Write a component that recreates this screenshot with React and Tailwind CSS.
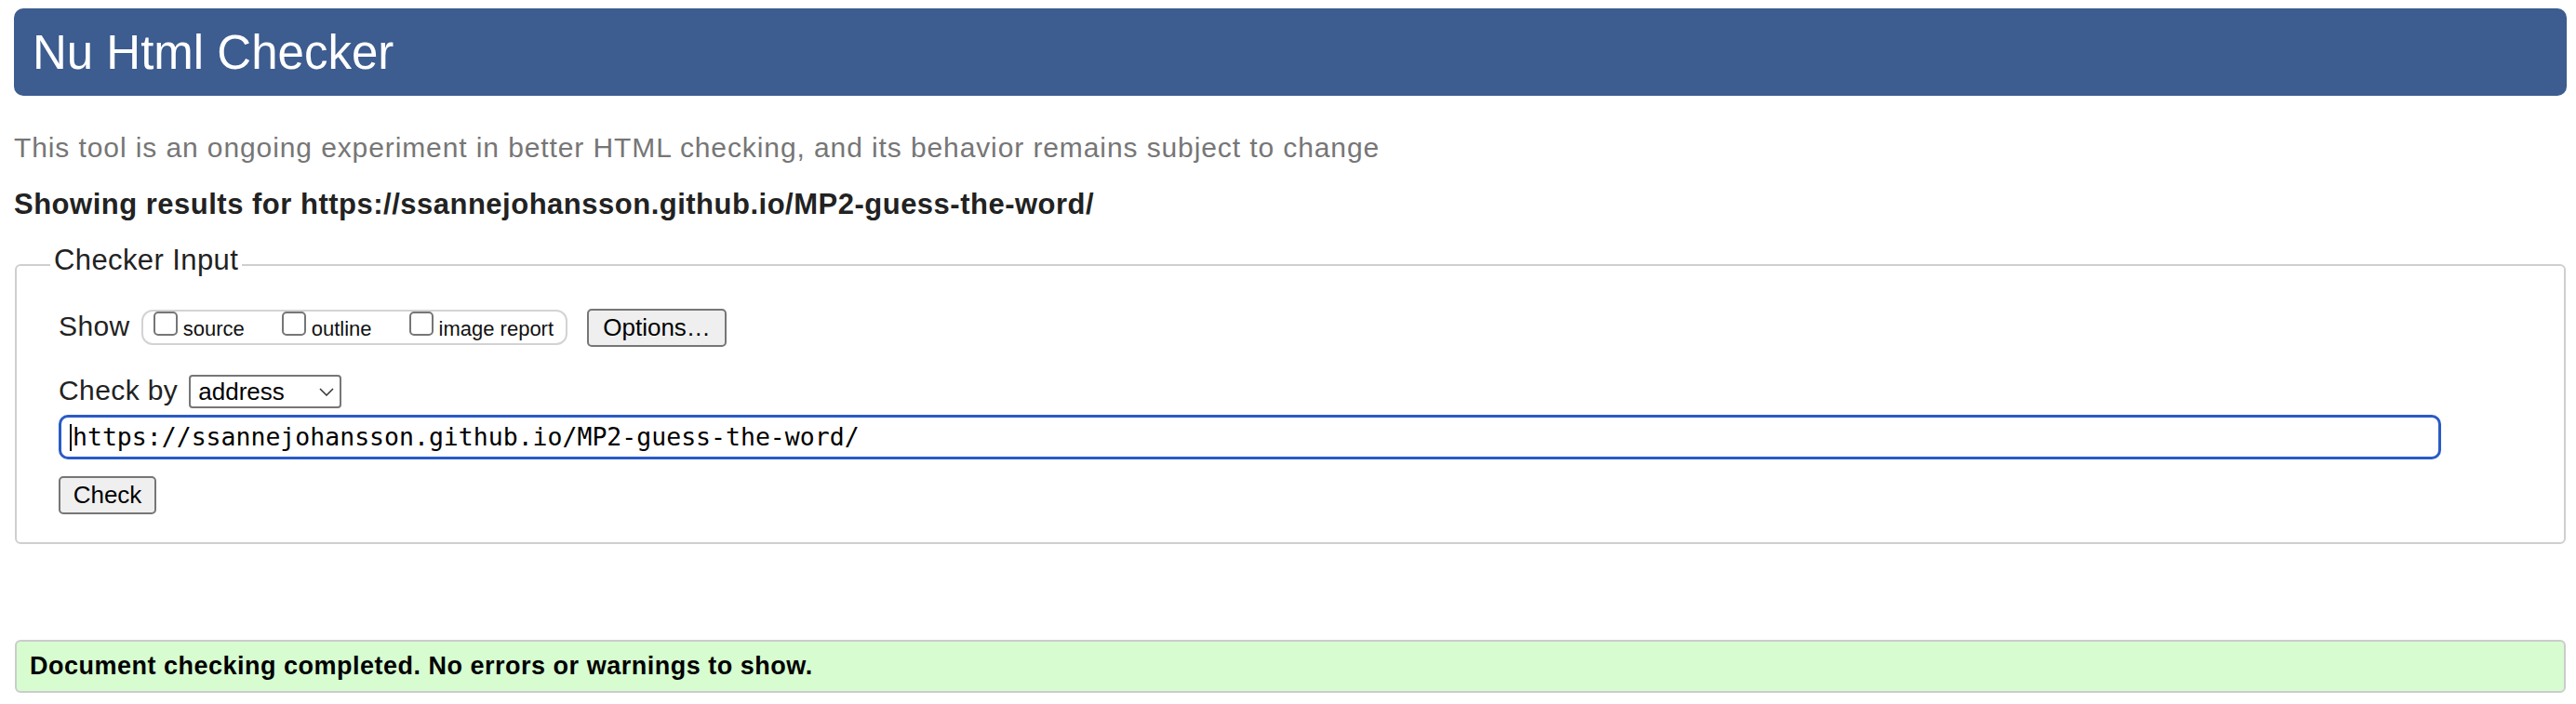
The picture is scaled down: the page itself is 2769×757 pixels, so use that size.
import React from 'react';

const Checkbox = ({ label }) => (
  <label className="flex items-baseline gap-[6px]">
    <span className="block w-[26px] h-[26px] border-2 border-[#767676] rounded-[5px] bg-white" />
    <span className="text-[22px] leading-[26px] text-[#111]">{label}</span>
  </label>
);

const Button = ({ children, className = '' }) => (
  <button
    className={`bg-[#efefef] border-2 border-[#767676] rounded-[5px] text-[26px] leading-[26px] pt-[5px] pb-[6px] text-black ${className}`}
  >
    {children}
  </button>
);

const App = () => {
  const url = 'https://ssannejohansson.github.io/MP2-guess-the-word/';

  return (
    <div className="min-h-screen bg-white pt-[9px] pl-[15px] pr-[10px] font-['Liberation_Sans',Arial,sans-serif]">
      <h1 className="h-[94px] rounded-[10px] bg-[#3d5c8f] flex items-center pl-[20px] text-white text-[51px] leading-none">
        Nu Html Checker
      </h1>

      <p className="mt-[38px] text-[30px] leading-[36px] tracking-[0.9px] text-[#767676]">
        This tool is an ongoing experiment in better HTML checking, and its behavior remains subject to change
      </p>

      <p className="mt-[25px] text-[31px] leading-[36px] tracking-[0.5px] font-bold text-[#222]">
        Showing results for {url}
      </p>

      <fieldset className="mt-[25px] mx-[1px] border-2 border-[#cfcfcf] rounded-[6px] pl-[36px] pb-[30px]">
        <legend className="px-[4px] pb-[9px] text-[31px] leading-[34px] tracking-[0.4px] text-[#222]">Checker Input</legend>

        <div className="pl-[9px] pt-[26px] text-[#222]">
          {/* show options */}
          <div className="flex items-baseline">
            <span className="text-[30px] leading-[30px] tracking-[0.4px]">Show</span>
            <div className="ml-[12px] flex items-baseline gap-[40px] h-[38px] border-2 border-[#d3d3d3] rounded-[12px] pl-[11px] pr-[13px]">
              <Checkbox label="source" />
              <Checkbox label="outline" />
              <Checkbox label="image report" />
            </div>
            <Button className="ml-[21px] w-[150px]">Options…</Button>
          </div>

          {/* check by */}
          <div className="mt-[30px] flex items-baseline">
            <span className="text-[30px] leading-[30px] tracking-[0.4px]">Check by</span>
            <div className="ml-[12px] w-[164px] h-[36px] border-2 border-[#767676] rounded-[4px] flex items-center justify-between pl-[8px] pr-[6px] text-[26px] leading-[26px] text-black">
              <span>address</span>
              <svg width="16" height="9" viewBox="0 0 16 9" fill="none">
                <polyline points="1,1 8,8 15,1" stroke="#333" strokeWidth="1.5" />
              </svg>
            </div>
          </div>

          {/* address input */}
          <div className="mt-[7px] w-[2561px] h-[48px] border-[3px] border-[#2a5bc6] rounded-[10px] flex items-center pl-[9px]">
            <span className="w-[2px] h-[29px] bg-black mr-[1px]" />
            <span className="font-['DejaVu_Sans_Mono',monospace] text-[26.5px] text-black">{url}</span>
          </div>

          <Button className="mt-[18px] w-[105px]">Check</Button>
        </div>
      </fieldset>

      <div className="mt-[103px] mx-[1px] h-[57px] bg-[#d6fcd0] border-2 border-[#cccccc] rounded-[6px] flex items-center pl-[14px]">
        <p className="text-[27px] tracking-[0.5px] font-bold text-black">Document checking completed. No errors or warnings to show.</p>
      </div>
    </div>
  );
};

export default App;
